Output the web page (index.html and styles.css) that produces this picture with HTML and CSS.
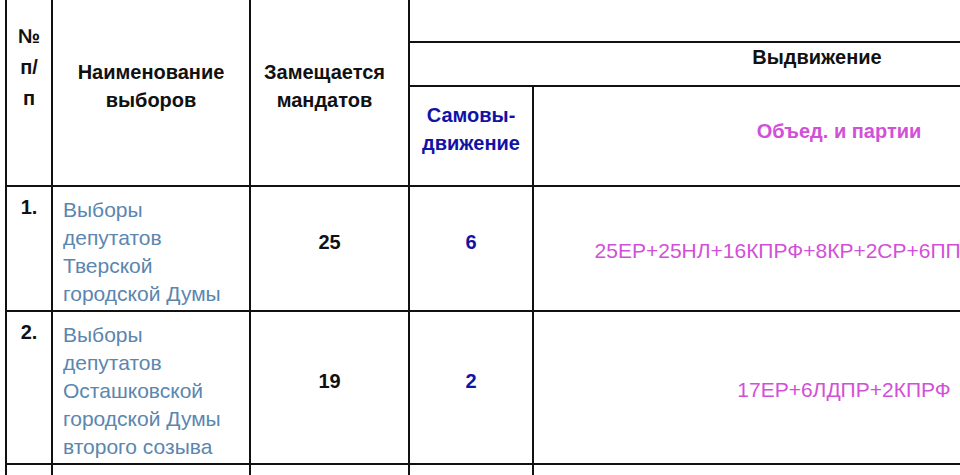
FILE: index.html
```html
<!DOCTYPE html>
<html lang="ru">
<head>
<meta charset="utf-8">
<title>Выборы</title>
<link rel="stylesheet" href="styles.css">
</head>
<body>
<table class="elections">
  <colgroup>
    <col class="c-num">
    <col class="c-name">
    <col class="c-seats">
    <col class="c-self">
    <col class="c-party">
  </colgroup>
  <thead>
    <tr class="h-top">
      <th rowspan="3" class="h-num">№<br>п/<br>п</th>
      <th rowspan="3" class="h-name">Наименование выборов</th>
      <th rowspan="3" class="h-seats">Замещается мандатов</th>
      <th colspan="2" class="h-blank"></th>
    </tr>
    <tr class="h-mid">
      <th colspan="2" class="h-nom">Выдвижение</th>
    </tr>
    <tr class="h-sub">
      <th class="h-self">Самовы-<br>движение</th>
      <th class="h-party">Объед. и партии</th>
    </tr>
  </thead>
  <tbody>
    <tr class="r1">
      <td class="num">1.</td>
      <td class="name">Выборы депутатов Тверской городской Думы</td>
      <td class="seats">25</td>
      <td class="self">6</td>
      <td class="party">25ЕР+25НЛ+16КПРФ+8КР+2СР+6ПП+4ЛДПР+1ЗП</td>
    </tr>
    <tr class="r2">
      <td class="num">2.</td>
      <td class="name">Выборы депутатов Осташковской городской Думы второго созыва</td>
      <td class="seats">19</td>
      <td class="self">2</td>
      <td class="party">17ЕР+6ЛДПР+2КПРФ</td>
    </tr>
    <tr class="r3">
      <td class="num">3.</td>
      <td class="name">Выборы депутатов Собрания депутатов района</td>
      <td class="seats">15</td>
      <td class="self">1</td>
      <td class="party">15ЕР+3ЛДПР</td>
    </tr>
  </tbody>
</table>
</body>
</html>
```

FILE: styles.css
```css
html, body {
  margin: 0;
  padding: 0;
  overflow: hidden;
  background: #ffffff;
}

body {
  font-family: "Liberation Sans", Arial, Helvetica, sans-serif;
  font-size: 20px;
  color: #111111;
}

.elections {
  border-collapse: collapse;
  margin: -13px 0 0 5px;
  table-layout: fixed;
  width: 1149px;
}

.c-num { width: 46px; }
.c-name { width: 198px; }
.c-seats { width: 159px; }
.c-self { width: 124px; }
.c-party { width: 622px; }

.elections th,
.elections td {
  border: 2px solid #111111;
  padding: 0;
  line-height: 28px;
}

.elections th {
  font-weight: bold;
  text-align: center;
  color: #111111;
}

.elections .h-top { height: 54px; }
.elections .h-mid { height: 44px; }
.elections .h-sub { height: 100px; }

.elections .h-num {
  vertical-align: top;
  padding-top: 32px;
  line-height: 31px;
}

.elections .h-name {
  vertical-align: top;
  padding-top: 69px;
}

.elections .h-seats {
  vertical-align: top;
  padding-top: 69px;
  padding-right: 10px;
}

.elections .h-nom {
  vertical-align: middle;
  padding-left: 70px;
  padding-bottom: 14px;
}

.elections .h-self {
  color: #1212a6;
  vertical-align: middle;
  padding-bottom: 14px;
}

.elections .h-party {
  color: #d250d8;
  vertical-align: middle;
  padding-bottom: 10px;
  padding-right: 10px;
}

.elections .num {
  vertical-align: top;
  text-align: center;
  font-weight: bold;
  padding-top: 6px;
}

.elections .name {
  vertical-align: top;
  color: #5b86ae;
  font-size: 21px;
  padding: 9px 14px 2px 10px;
}

.elections .seats {
  vertical-align: middle;
  text-align: center;
  font-weight: bold;
  padding-bottom: 13px;
}

.elections .self {
  vertical-align: middle;
  text-align: center;
  font-weight: bold;
  color: #1212a6;
  padding-bottom: 13px;
}

.elections .party {
  vertical-align: middle;
  text-align: center;
  color: #d250d8;
  font-size: 21px;
  padding-top: 4px;
}
```
